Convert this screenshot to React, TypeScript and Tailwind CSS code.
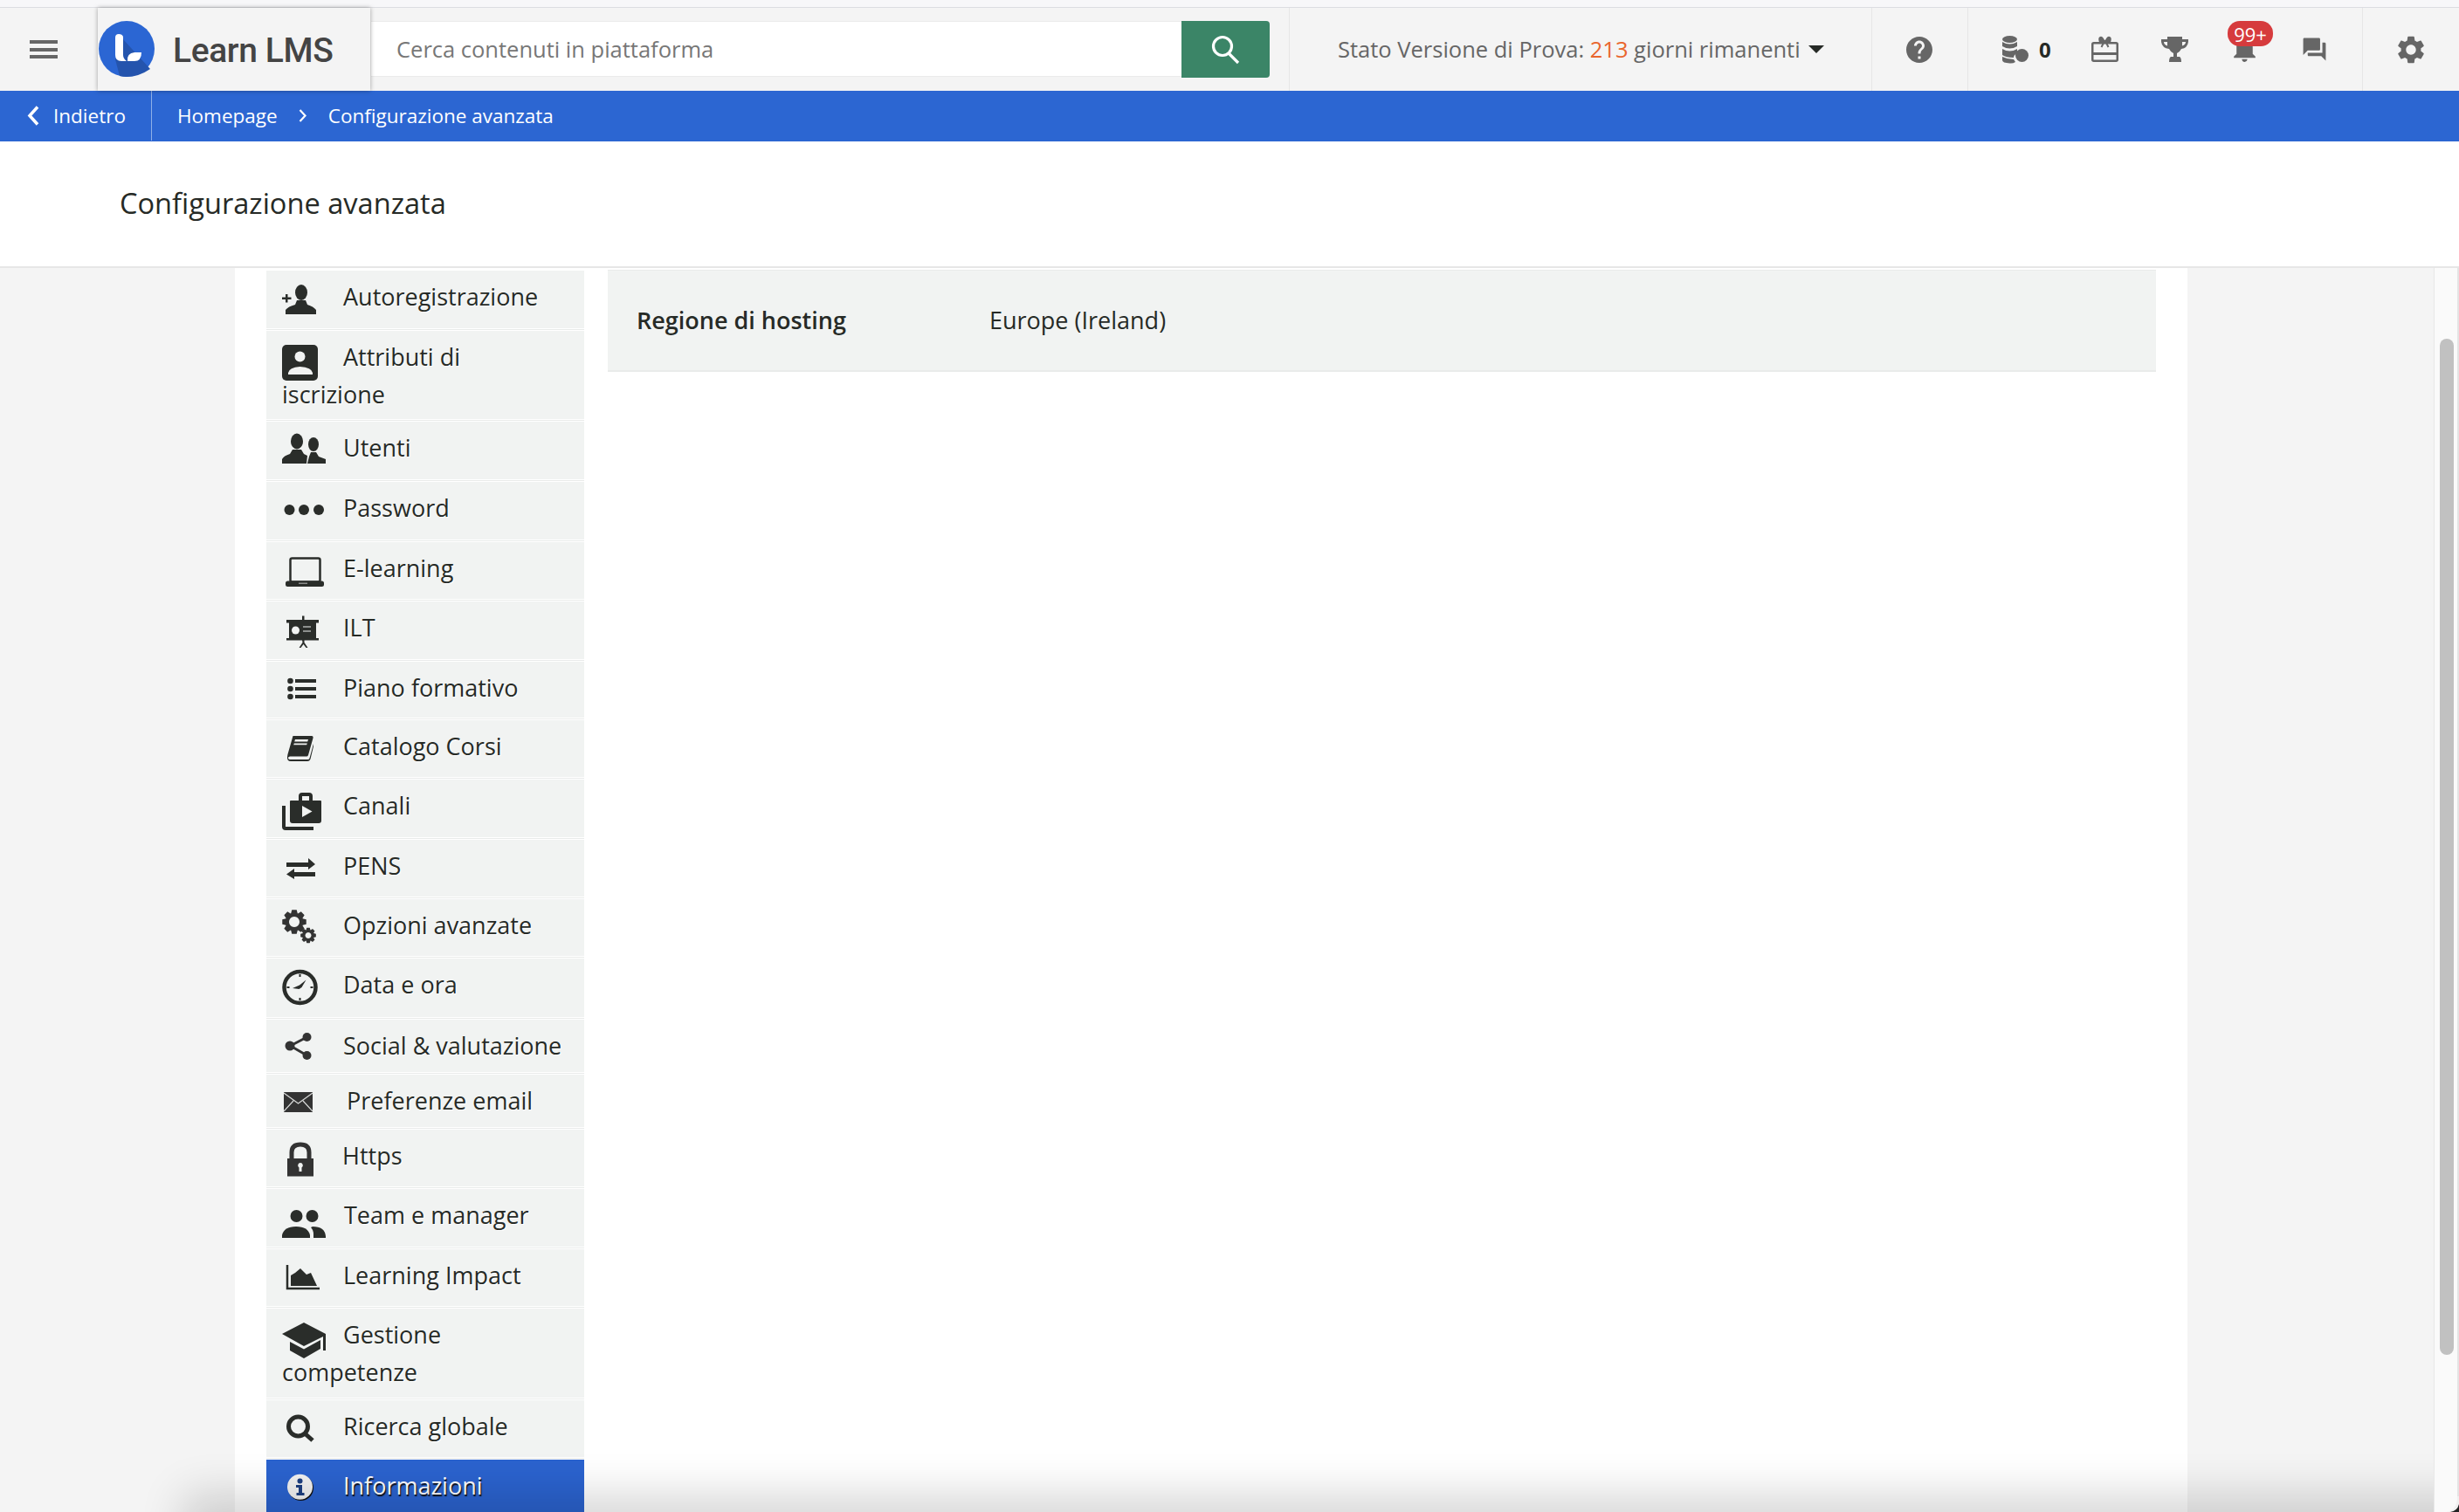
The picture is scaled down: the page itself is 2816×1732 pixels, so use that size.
import React from "react";
import { MdHelp, MdForum, MdSettings, MdNotifications } from "react-icons/md";

const D = "#2a2d2a";

function Ico({ children }: { children: React.ReactNode }) {
  return (
    <svg width="70" height="66" viewBox="0 0 70 66" className="block -mt-[8px] overflow-visible" fill={D}>
      {children}
    </svg>
  );
}

const gearPath = (cx: number, cy: number, r: number, teeth: number) => {
  let d = "";
  const outer = r;
  const inner = r * 0.74;
  for (let i = 0; i < teeth; i++) {
    const a = (i / teeth) * Math.PI * 2;
    const w = Math.PI / teeth;
    const pts = [
      [inner, a - w * 0.95],
      [outer, a - w * 0.5],
      [outer, a + w * 0.5],
      [inner, a + w * 0.95],
    ];
    pts.forEach(([rad, ang], j) => {
      const x = cx + rad * Math.cos(ang);
      const y = cy + rad * Math.sin(ang);
      d += `${i === 0 && j === 0 ? "M" : "L"}${x.toFixed(2)} ${y.toFixed(2)} `;
    });
  }
  return d + "Z";
};

const menu: { label: string; box: string; slot: string; active?: boolean; icon: React.ReactNode }[] = [
  {
    label: "Autoregistrazione",
    box: "h-[66px]",
    slot: "w-[70px]",
    icon: (
      <Ico>
        <path d="M0 30.500h4v-3.500h2.500v3.500h4v2.500h-4v3.500H4V33H0z" />
        <ellipse cx="22" cy="25" rx="7" ry="9" />
        <path d="M4 50v-5q3-4 11-6l2-5h10l2 5q7 2 10 6v5z" />
      </Ico>
    ),
  },
  {
    label: "Attributi di iscrizione",
    box: "h-[101px]",
    slot: "w-[70px]",
    icon: (
      <Ico>
        <rect x="0" y="16" width="41" height="41" rx="5" />
        <circle cx="20.500" cy="29.500" r="6" fill="#f1f3f2" />
        <path d="M7 50v-2q1-6 13.500-7Q34 42 35 48v2z" fill="#f1f3f2" />
      </Ico>
    ),
  },
  {
    label: "Utenti",
    box: "h-[66px]",
    slot: "w-[70px]",
    icon: (
      <Ico>
        <ellipse cx="17" cy="22.500" rx="7" ry="9" />
        <path d="M0 48v-5q2-4 9-6l3-5h10l3 5 4 2-1 9z" />
        <ellipse cx="36" cy="26" rx="6" ry="8" />
        <path d="M29 48l2-8 2-5h6l3 5 8 3v5z" />
      </Ico>
    ),
  },
  {
    label: "Password",
    box: "h-[66px]",
    slot: "w-[70px]",
    icon: (
      <Ico>
        <circle cx="8.500" cy="32" r="6" />
        <circle cx="25" cy="32" r="6" />
        <circle cx="42" cy="32" r="6" />
      </Ico>
    ),
  },
  {
    label: "E-learning",
    box: "h-[65px]",
    slot: "w-[70px]",
    icon: (
      <Ico>
        <rect x="9.500" y="18.500" width="34" height="27" rx="2" fill="none" stroke={D} strokeWidth="2.500" />
        <rect x="4" y="44.500" width="44" height="6.500" rx="2.500" />
        <rect x="19" y="46.500" width="10" height="1.500" fill="#8a8c8a" />
      </Ico>
    ),
  },
  {
    label: "ILT",
    box: "h-[66px]",
    slot: "w-[70px]",
    icon: (
      <Ico>
        <rect x="23" y="16.500" width="2.500" height="5" />
        <rect x="5" y="21" width="37" height="3.500" />
        <rect x="8" y="24" width="31" height="19" />
        <rect x="5" y="42" width="37" height="2.500" />
        <path d="M23 44h2.500v3l4 6h-2l-3-4-3 4h-2l4-6z" />
        <circle cx="15.500" cy="33" r="4.500" fill="#f1f3f2" />
        <rect x="24" y="28" width="9" height="2" fill="#8d908e" />
        <rect x="24" y="33" width="9" height="2" fill="#8d908e" />
      </Ico>
    ),
  },
  {
    label: "Piano formativo",
    box: "h-[64px]",
    slot: "w-[70px]",
    icon: (
      <Ico>
        <circle cx="9.500" cy="22" r="3.300" />
        <circle cx="9.500" cy="31" r="3.300" />
        <circle cx="9.500" cy="40" r="3.300" />
        <rect x="15" y="20" width="24" height="4" />
        <rect x="15" y="29" width="24" height="4" />
        <rect x="15" y="38" width="24" height="4" />
      </Ico>
    ),
  },
  {
    label: "Catalogo Corsi",
    box: "h-[65px]",
    slot: "w-[70px]",
    icon: (
      <Ico>
        <path d="M12.500 18H34q2 0 1.500 2.500L30 40q-.5 1.500-2 1.500H9q-2.500.5-2 2t2 1.500h20.500q1.500 0 2-1.500L36 27v3l-3.500 14.500Q31.500 47 29 47H10q-4.500 0-4-5l.5-3z" />
        <path d="M15 22h15l-.8 2.500h-15zM13.800 26.500h15l-.6 1.800h-15z" fill="#f1f3f2" />
      </Ico>
    ),
  },
  {
    label: "Canali",
    box: "h-[66px]",
    slot: "w-[70px]",
    icon: (
      <Ico>
        <path d="M9 25q0-1 1-1h9v-5q0-4 4-4h8q4 0 4 4v5h9q1 0 1 1v22q0 3-3 3H12q-3 0-3-3zM23 19v5h8v-5z" fillRule="evenodd" />
        <path d="M2 30v24q0 2 2 2h32" fill="none" stroke={D} strokeWidth="4" />
        <path d="M23 30l11.500 6.500L23 43z" fill="#f1f3f2" />
      </Ico>
    ),
  },
  {
    label: "PENS",
    box: "h-[65px]",
    slot: "w-[70px]",
    icon: (
      <Ico>
        <path d="M5 26h25v-5l8 7-8 6v-3H5z" />
        <path d="M38 37H14v-4l-9 6.500 9 5.500v-3h24z" />
      </Ico>
    ),
  },
  {
    label: "Opzioni avanzate",
    box: "h-[65px]",
    slot: "w-[70px]",
    icon: (
      <Ico>
        <path d={gearPath(14, 26, 14, 8) + " M14 20a6 6 0 1 0 .01 0z"} fillRule="evenodd" fill="#333" />
        <path d={gearPath(30, 41.5, 9, 8) + " M30 38a3.500 3.500 0 1 0 .01 0z"} fillRule="evenodd" fill="#333" />
      </Ico>
    ),
  },
  {
    label: "Data e ora",
    box: "h-[67px]",
    slot: "w-[70px]",
    icon: (
      <Ico>
        <circle cx="20.500" cy="33" r="18" fill="none" stroke={D} strokeWidth="4.500" />
        <path d="M12 34l8-3.500 7.500-6-5 8.500-3 2z" />
        <rect x="19.500" y="18" width="2" height="3" />
        <rect x="19.500" y="45" width="2" height="3" />
        <rect x="5.500" y="32" width="3" height="2" />
        <rect x="32.500" y="32" width="3" height="2" />
      </Ico>
    ),
  },
  {
    label: "Social & valutazione",
    box: "h-[60px]",
    slot: "w-[70px]",
    icon: (
      <Ico>
        <path d="M9.500 30L28.500 20M9.500 30l19 11" stroke="#333" strokeWidth="3" />
        <circle cx="9" cy="30" r="5.500" fill="#333" />
        <circle cx="28.500" cy="20" r="5" fill="#333" />
        <circle cx="28.500" cy="41" r="5" fill="#333" />
      </Ico>
    ),
  },
  {
    label: "Preferenze email",
    box: "h-[60px]",
    slot: "w-[74px]",
    icon: (
      <Ico>
        <rect x="2" y="20" width="33" height="23" fill="#333" />
        <path d="M2 21l16.500 12L35 21M2 42l11-12M35 42L24 30" fill="none" stroke="#d9dbda" strokeWidth="1.200" />
      </Ico>
    ),
  },
  {
    label: "Https",
    box: "h-[65px]",
    slot: "w-[69px]",
    icon: (
      <Ico>
        <path d="M11 34V26q0-9 10-9t10 9v8" fill="none" stroke="#333" strokeWidth="5" />
        <rect x="6" y="33" width="30" height="20.500" fill="#333" />
        <path d="M21 38a3 3 0 0 1 1.500 5.500V48h-3v-4.500A3 3 0 0 1 21 38z" fill="#f1f3f2" />
      </Ico>
    ),
  },
  {
    label: "Team e manager",
    box: "h-[66px]",
    slot: "w-[71px]",
    icon: (
      <Ico>
        <circle cx="16.500" cy="31" r="7" />
        <circle cx="34.500" cy="31" r="7" />
        <path d="M0 56v-3q2-10 16-10t16 10v3z" />
        <path d="M35 43q14 0 15 11v2H36v-4q0-5-3-8z" />
      </Ico>
    ),
  },
  {
    label: "Learning Impact",
    box: "h-[65px]",
    slot: "w-[70px]",
    icon: (
      <Ico>
        <path d="M6 18v27h37" fill="none" stroke={D} strokeWidth="2.500" />
        <path d="M10 42V30l5-3 6-5 7 7 5-2 7 15z" />
      </Ico>
    ),
  },
  {
    label: "Gestione competenze",
    box: "h-[102px]",
    slot: "w-[70px]",
    icon: (
      <Ico>
        <path d="M25 16l25 13v19h-3V32L25 43 0 29z" />
        <path d="M9 38l16 8.500L44 36v10L25 57 9 48z" />
      </Ico>
    ),
  },
  {
    label: "Ricerca globale",
    box: "h-[65px]",
    slot: "w-[70px]",
    icon: (
      <Ico>
        <circle cx="18.500" cy="30" r="11" fill="none" stroke={D} strokeWidth="5" />
        <path d="M26 38l9 8" stroke={D} strokeWidth="5" />
      </Ico>
    ),
  },
  {
    label: "Informazioni",
    box: "h-[60px]",
    slot: "w-[70px]",
    active: true,
    icon: (
      <Ico>
        <circle cx="21.500" cy="32.500" r="14.500" fill="#111" />
        <circle cx="20.500" cy="31.300" r="14.500" fill="#f2f2f2" />
        <circle cx="20.500" cy="24.500" r="3" fill="#1d3f80" />
        <path d="M16 29h7v9h2.500v3h-9v-3H19v-6h-3z" fill="#1d3f80" />
      </Ico>
    ),
  },
];

function MenuItem({ item }: { item: (typeof menu)[number] }) {
  return (
    <li
      className={`${item.box} mb-[3px] pl-[18px] pr-[20px] pt-[8px] text-[27px] leading-[43px] shadow-[0_1px_0_#ffffff,0_2px_0_#e9ebea] ${
        item.active
          ? "bg-[#2b63cf] text-white [text-shadow:1px_2px_1px_#111]"
          : "bg-[#f1f3f2] text-[#262a26] [text-shadow:1px_1px_0_#ffffff]"
      }`}
    >
      <span className={`${item.slot} inline-block h-[43px] align-top`}>{item.icon}</span>
      {item.label}
    </li>
  );
}

export default function App() {
  return (
    <div className="relative flex h-[1732px] w-[2816px] flex-col overflow-hidden bg-white font-['Open_Sans',sans-serif]">
      <div className="h-[9px] shrink-0 border-b border-[#dcdde1] bg-[#f7f7f9]" />

      <header className="flex h-[95px] shrink-0 items-stretch bg-[#f4f4f4] text-[#666666]">
        <div className="flex w-[112px] flex-col gap-[4.500px] pl-[34px] pt-[37px]">
          <span className="block h-[4px] w-[32px] bg-[#666666]" />
          <span className="block h-[4px] w-[32px] bg-[#666666]" />
          <span className="block h-[4px] w-[32px] bg-[#666666]" />
        </div>
        <div className="relative z-10 flex w-[312px] items-center bg-[#f4f4f4] pl-[1px] shadow-[0_0_5px_rgba(0,0,0,0.35)]">
          <svg width="64" height="64" viewBox="0 0 64 64" className="-mt-[1px]">
            <circle cx="32" cy="32" r="32" fill="#2b66d3" />
            <path d="M28 21l31 34Q46 64 32 64q-4 0-8-1L19 44z" fill="#2454ad" />
            <path d="M19 19q0-4 4-4t5 3v21q0 4 4 7h-6q-7 0-7-7z" fill="#fff" />
            <path d="M33 46q-1-9 8-10h8q0 10-8 10z" fill="#fff" />
          </svg>
          <span className="ml-[21px] mt-[3px] font-['Roboto',sans-serif] text-[39px] font-medium leading-none tracking-[-0.4px] text-[#444444]">
            Learn LMS
          </span>
        </div>

        <div className="ml-[1px] mt-[15px] flex h-[65px] w-[1029px]">
          <input
            readOnly
            placeholder="Cerca contenuti in piattaforma"
            className="h-[64px] w-[928px] border-y border-[#ebebeb] bg-white pl-[29px] text-[25.500px] outline-none placeholder:text-[#777777]"
          />
          <div className="flex w-[101px] items-center justify-center rounded-r-[4px] bg-[#3b8567]">
            <svg width="34" height="34" viewBox="0 0 34 34" fill="none" stroke="#fff" strokeWidth="3.200">
              <circle cx="13" cy="13" r="10.500" />
              <path d="M20 21l11 11" />
            </svg>
          </div>
        </div>

        <div className="ml-[22px] flex w-[667px] items-center border-l border-[#e6e6e6] pl-[55px] text-[25.500px]">
          <span>
            Stato Versione di Prova: <span className="text-[#e9662d]">213</span> giorni rimanenti
          </span>
          <span className="ml-[9px] h-0 w-0 border-x-[9px] border-t-[9px] border-x-transparent border-t-[#262a26]" />
        </div>

        <div className="flex w-[110px] items-center justify-center border-l border-[#e6e6e6] pr-[1px]">
          <MdHelp size={36} />
        </div>

        <div className="flex w-[452px] items-center border-l border-[#e6e6e6] pl-[39px]">
          <svg width="31" height="35" viewBox="0 0 31 35" fill="#666666" className="shrink-0">
            <ellipse cx="8.500" cy="6" rx="8.500" ry="4" />
            <path d="M0 9q8.500 5 17 0v5q-8.500 5-17 0z" />
            <path d="M0 17q8.500 5 17 0v5q-4 2-4 5-9 0-13-3z" />
            <path d="M0 26q6 3 13 3l2 3q-3 2-6.500 1.500Q0 33 0 30z" />
            <circle cx="22.500" cy="24.500" r="7.500" />
          </svg>
          <span className="ml-[11px] w-[15px] text-[24px] font-bold leading-none text-[#262a26]">0</span>
          <svg width="31" height="35" viewBox="0 0 31 35" fill="#666666" className="ml-[45px] shrink-0">
            <rect x="1.250" y="10.250" width="28.500" height="20.500" rx="1.500" fill="none" stroke="#666666" strokeWidth="2.500" />
            <rect x="1" y="21" width="29" height="3" />
            <path d="M10 3q3-1 5.500 5Q18 2 21 3t1 6.500h-13q-2-5.500 1-6.500z" />
            <path d="M15.500 7l-4 8M15.500 7l4 8" stroke="#666666" strokeWidth="2" fill="none" />
          </svg>
          <svg width="31" height="35" viewBox="0 0 31 35" fill="#666666" className="ml-[49px] shrink-0">
            <path d="M7 3h17v3h7v3q-1 7-8 8-2 4-5 5v4h3q2 1 2 6H9q0-5 2-6h3v-4q-3-1-5-5-8-1-9-8V6h7zM3 9q0 3 4 4.500V9zm25 0h-4v4.500q4-1.500 4-4.500z" fillRule="evenodd" />
          </svg>
          <div className="relative ml-[51px] h-[35px] w-[33px] shrink-0">
            <MdNotifications size={37} className="absolute -left-[5px] -top-[2px]" />
            <span className="absolute -left-[6px] -top-[15px] flex h-[29px] w-[52px] items-center justify-center rounded-[14px] bg-[#d63b3d] text-[22px] leading-none text-white">
              99+
            </span>
          </div>
          <MdForum size={31} className="ml-[45px] shrink-0" />
        </div>

        <div className="flex w-[111px] items-center border-l border-[#e6e6e6] pl-[36px]">
          <MdSettings size={38} />
        </div>
      </header>

      <nav className="flex h-[58px] shrink-0 items-center bg-[#2c66d2] pb-[1px] text-[22.500px] font-medium text-white">
        <div className="flex h-full w-[174px] items-center border-r border-[#8fb0e8] pl-[31px]">
          <svg width="14" height="23" viewBox="0 0 14 23" fill="none" stroke="#fff" strokeWidth="3.500">
            <path d="M12 1.500L3 11.500l9 10" />
          </svg>
          <span className="ml-[16px]">Indietro</span>
        </div>
        <span className="ml-[29px]">Homepage</span>
        <svg width="9" height="15" viewBox="0 0 9 15" fill="none" stroke="#fff" strokeWidth="2.200" className="ml-[24px]">
          <path d="M1.500 1l6 6.500-6 6.500" />
        </svg>
        <span className="ml-[25px]">Configurazione avanzata</span>
      </nav>

      <div className="flex h-[145px] shrink-0 items-center border-b-2 border-[#e6e6e6] bg-white pl-[137px]">
        <h1 className="text-[32.600px] font-medium text-[#262a26]">Configurazione avanzata</h1>
      </div>

      <main className="flex min-h-0 flex-1">
        <div className="relative flex min-w-0 flex-1 overflow-hidden bg-[#f4f4f4]">
          <div className="w-[269px] shrink-0" />
          <div className="flex w-[2236px] shrink-0 gap-[27px] bg-white pl-[36px]">
            <ul className="mt-[3px] w-[364px] shrink-0">
              {menu.map((item) => (
                <MenuItem key={item.label} item={item} />
              ))}
            </ul>
            <section className="mt-[2px] flex h-[117px] w-[1773px] items-center border-b-2 border-t border-[#e9ebea] bg-[#f1f3f2] pl-[33px] text-[27px] text-[#262a26]">
              <span className="w-[404px] font-semibold">Regione di hosting</span>
              <span>Europe (Ireland)</span>
            </section>
          </div>
          <div className="pointer-events-none absolute -bottom-[30px] left-[230px] right-[-60px] h-[30px] shadow-[0_0_50px_20px_rgba(0,0,0,0.16)]" />
        </div>
        <aside className="relative w-[29px] shrink-0 border-l border-r-2 border-l-[#e8e8e8] border-r-[#e4e4e4] bg-[#fafafa] pl-[6px] pt-[81px]">
          <div className="h-[1164px] w-[16px] rounded-full bg-[#c1c1c1]" />
          <svg width="16" height="18" viewBox="0 0 16 18" className="absolute -right-[2px] bottom-0">
            <path d="M16 0v18H2Q14 16 14 0z" fill="#f0f0f0" />
            <path d="M16 9v9H6q8-1 10-9z" fill="#222" />
          </svg>
        </aside>
      </main>
    </div>
  );
}
